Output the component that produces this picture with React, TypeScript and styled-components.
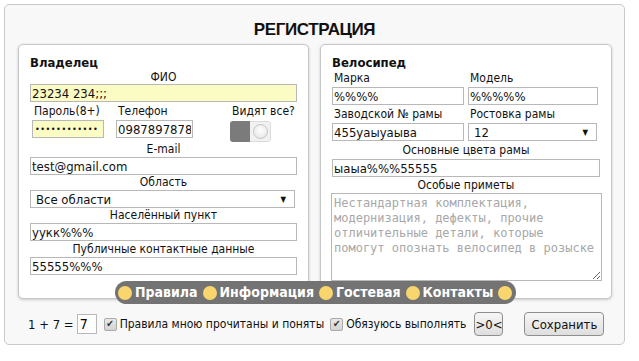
import React from "react";
import styled, { createGlobalStyle } from "styled-components";

const Global = createGlobalStyle`
  html, body { margin: 0; padding: 0; background: #fff; }
  body {
    font-family: "DejaVu Sans Condensed", "DejaVu Sans", sans-serif;
    font-stretch: condensed;
    color: #111;
  }
  * { box-sizing: border-box; }
`;

const Page = styled.div`
  padding: 4px;
  width: 639px;
  height: 361px;
`;

const Panel = styled.div`
  width: 621px;
  height: 341px;
  background: #f8f8f8;
  border: 1px solid #c9c9c9;
  border-radius: 5px;
  padding: 0 0 0 13px;
  display: flex;
  flex-direction: column;
`;

const Title = styled.h1`
  margin: 0;
  padding-top: 13px;
  height: 39px;
  line-height: 24px;
  text-align: center;
  font-family: "Liberation Sans", Arial, sans-serif;
  font-size: 17px;
  letter-spacing: -0.4px;
  font-weight: bold;
  color: #111;
  padding-right: 13px;
`;

const Columns = styled.div`
  display: flex;
  gap: 11px;
`;

const Fieldset = styled.div<{ $w: number }>`
  width: ${(p) => p.$w}px;
  height: 255px;
  background: #fff;
  border: 1px solid #c6c6c6;
  border-radius: 5px;
  box-shadow: 0 1px 3px rgba(0, 0, 0, 0.18);
  padding: 10px 11px 0 11px;
  display: flex;
  flex-direction: column;
`;

const Legend = styled.div`
  font-size: 13px;
  font-weight: bold;
  line-height: 15px;
  height: 15px;
`;

const Label = styled.div<{ $h?: number; $left?: boolean }>`
  font-size: 12px;
  line-height: ${(p) => p.$h ?? 15}px;
  height: ${(p) => p.$h ?? 15}px;
  text-align: ${(p) => (p.$left ? "left" : "center")};
  padding-left: ${(p) => (p.$left ? 2 : 0)}px;
  white-space: nowrap;
`;

const Input = styled.input<{ $yellow?: boolean; $w?: number }>`
  display: block;
  width: ${(p) => (p.$w ? `${p.$w}px` : "100%")};
  height: 18px;
  margin: 0;
  padding: 0 1px;
  border: 1px solid #b8b8b8;
  background: ${(p) => (p.$yellow ? "#fbfbc4" : "#fff")};
  font-family: inherit;
  font-stretch: condensed;
  font-size: 13px;
  color: #111;
  outline: none;
`;

const Password = styled(Input)`
  font-size: 9px;
  letter-spacing: 0.5px;
  padding-left: 2px;
`;

const Select = styled.div<{ $w?: number }>`
  display: flex;
  align-items: center;
  justify-content: space-between;
  width: ${(p) => (p.$w ? `${p.$w}px` : "100%")};
  height: 18px;
  border: 1px solid #b8b8b8;
  background: #fff;
  padding: 0 8px 0 5px;
  font-size: 13px;
  &::after {
    content: "▼";
    font-size: 8px;
    color: #111;
  }
`;

const Row = styled.div<{ $h: number; $gap?: number }>`
  display: flex;
  height: ${(p) => p.$h}px;
  gap: ${(p) => p.$gap ?? 0}px;
`;

const Cell = styled.div<{ $w: number; $ml?: number }>`
  width: ${(p) => p.$w}px;
  margin-left: ${(p) => p.$ml ?? 0}px;
  display: flex;
  flex-direction: column;
`;

const Toggle = styled.div`
  display: flex;
  width: 41px;
  height: 21px;
  border-radius: 3px;
  overflow: hidden;
  margin-top: 1px;
`;

const Track = styled.div`
  width: 20px;
  background: #7b7b7b;
`;

const Knob = styled.div`
  width: 21px;
  background: #f1f1f1;
  border: 1px solid #dcdcdc;
  border-left: none;
  border-radius: 0 3px 3px 0;
  display: flex;
  align-items: center;
  justify-content: center;
  &::before {
    content: "";
    width: 13px;
    height: 13px;
    border-radius: 50%;
    border: 1px solid #c4c4c4;
    background: radial-gradient(circle at 50% 40%, #fff, #e2e2e2);
  }
`;

const Textarea = styled.textarea`
  display: block;
  width: 271px;
  height: 88px;
  margin: 0 0 0 -1px;
  padding: 2px 2px;
  border: 1px solid #b8b8b8;
  font-family: "DejaVu Sans Mono", monospace;
  font-size: 12px;
  line-height: 15px;
  color: #111;
  resize: both;
  outline: none;
  &::placeholder { color: #a8a8a8; }
`;

const Spacer = styled.div<{ $h: number }>`
  height: ${(p) => p.$h}px;
`;

const NavBar = styled.nav`
  position: relative;
  z-index: 1;
  align-self: flex-start;
  margin: -18px 0 0 97px;
  height: 23px;
  background: #737373;
  border-radius: 12px;
  display: flex;
  align-items: center;
  padding: 0 4px 0 3px;
`;

const Dot = styled.span`
  width: 14px;
  height: 14px;
  border-radius: 50%;
  background: #f9d56e;
  flex: none;
`;

const NavLink = styled.a`
  color: #fff;
  font-family: "DejaVu Sans", sans-serif;
  font-weight: bold;
  font-size: 14px;
  text-decoration: none;
  margin: 0 5px 0 3px;
  white-space: nowrap;
  line-height: 23px;
`;

const Bottom = styled.div`
  display: flex;
  align-items: center;
  height: 40px;
  padding-left: 10px;
  font-size: 12px;
`;

const Text = styled.span<{ $ml?: number; $size?: number }>`
  margin-left: ${(p) => p.$ml ?? 0}px;
  font-size: ${(p) => p.$size ?? 12}px;
  white-space: nowrap;
`;

const Captcha = styled.input`
  width: 20px;
  height: 20px;
  margin: 0 0 0 3px;
  padding: 0 2px;
  border: 1px solid #b8b8b8;
  font-family: inherit;
  font-size: 14px;
  outline: none;
`;

const Check = styled.span<{ $ml: number }>`
  width: 13px;
  height: 13px;
  margin: 0 3px 0 ${(p) => p.$ml}px;
  border: 1px solid #a9a9a9;
  border-radius: 2px;
  background: linear-gradient(#e8e8e8, #d4d4d4);
  display: flex;
  align-items: center;
  justify-content: center;
  font-size: 10px;
  line-height: 1;
  color: #333;
  &::before { content: "✔"; }
`;

const Button = styled.button<{ $w: number; $ml: number }>`
  width: ${(p) => p.$w}px;
  height: 24px;
  margin-left: ${(p) => p.$ml}px;
  padding: 0;
  border: 1px solid #8e8e8e;
  border-radius: 4px;
  background: linear-gradient(#f6f6f6, #dedede);
  font-family: inherit;
  font-stretch: condensed;
  font-size: 13px;
  color: #111;
`;

export default function App() {
  return (
    <Page>
      <Global />
      <Panel>
        <Title>РЕГИСТРАЦИЯ</Title>
        <Columns>
          <Fieldset $w={291}>
            <Legend>Владелец</Legend>
            <Label $h={14}>ФИО</Label>
            <Input $yellow defaultValue="23234 234;;;" />
            <Row $h={40}>
              <Cell $w={72} $ml={2}>
                <Label $left $h={18}>Пароль(8+)</Label>
                <Password $yellow type="password" defaultValue="123456789012" />
              </Cell>
              <Cell $w={77} $ml={12}>
                <Label $left $h={18}>Телефон</Label>
                <Input defaultValue="0987897878" />
              </Cell>
              <Cell $w={62} $ml={37}>
                <Label $left $h={18}>Видят все?</Label>
                <Toggle>
                  <Track />
                  <Knob />
                </Toggle>
              </Cell>
            </Row>
            <Label>E-mail</Label>
            <Input defaultValue="test@gmail.com" />
            <Label>Область</Label>
            <Select $w={265}>Все области</Select>
            <Label>Населённый пункт</Label>
            <Input defaultValue="уукк%%%" />
            <Label $h={16}>Публичные контактные данные</Label>
            <Input defaultValue="55555%%%" />
          </Fieldset>
          <Fieldset $w={292}>
            <Legend>Велосипед</Legend>
            <Row $h={35} $gap={4}>
              <Cell $w={132}>
                <Label $left $h={17}>Марка</Label>
                <Input defaultValue="%%%%" />
              </Cell>
              <Cell $w={130}>
                <Label $left $h={17}>Модель</Label>
                <Input defaultValue="%%%%%" />
              </Cell>
            </Row>
            <Spacer $h={1} />
            <Row $h={35} $gap={4}>
              <Cell $w={132}>
                <Label $left $h={17}>Заводской № рамы</Label>
                <Input defaultValue="455уаыуаыва" />
              </Cell>
              <Cell $w={130}>
                <Label $left $h={17}>Ростовка рамы</Label>
                <Select $w={129}>12</Select>
              </Cell>
            </Row>
            <Spacer $h={1} />
            <Label $h={17}>Основные цвета рамы</Label>
            <Input defaultValue="ыаыа%%%55555" />
            <Label $h={16}>Особые приметы</Label>
            <Textarea placeholder="Нестандартная комплектация, модернизация, дефекты, прочие отличительные детали, которые помогут опознать велосипед в розыске" />
          </Fieldset>
        </Columns>
        <NavBar>
          <Dot />
          <NavLink href="#">Правила</NavLink>
          <Dot />
          <NavLink href="#">Информация</NavLink>
          <Dot />
          <NavLink href="#">Гостевая</NavLink>
          <Dot />
          <NavLink href="#">Контакты</NavLink>
          <Dot />
        </NavBar>
        <Bottom>
          <Text $size={13}>1 + 7 =</Text>
          <Captcha defaultValue="7" />
          <Check $ml={7} />
          <Text>Правила мною прочитаны и поняты</Text>
          <Check $ml={6} />
          <Text>Обязуюсь выполнять</Text>
          <Button $w={29} $ml={8}>&gt;0&lt;</Button>
          <Button $w={80} $ml={21}>Сохранить</Button>
        </Bottom>
      </Panel>
    </Page>
  );
}
